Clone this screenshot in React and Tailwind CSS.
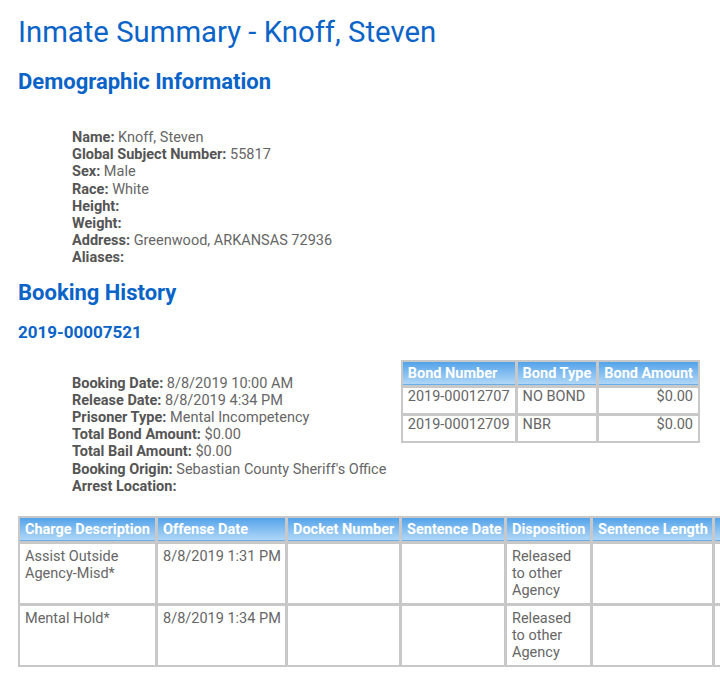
import React from "react"

const demographics = [
  ["Name:", "Knoff, Steven"],
  ["Global Subject Number:", "55817"],
  ["Sex:", "Male"],
  ["Race:", "White"],
  ["Height:", ""],
  ["Weight:", ""],
  ["Address:", "Greenwood, ARKANSAS 72936"],
  ["Aliases:", ""],
]

const booking = [
  ["Booking Date:", "8/8/2019 10:00 AM"],
  ["Release Date:", "8/8/2019 4:34 PM"],
  ["Prisoner Type:", "Mental Incompetency"],
  ["Total Bond Amount:", "$0.00"],
  ["Total Bail Amount:", "$0.00"],
  ["Booking Origin:", "Sebastian County Sheriff's Office"],
  ["Arrest Location:", ""],
]

const bonds = [
  ["2019-00012707", "NO BOND", "$0.00"],
  ["2019-00012709", "NBR", "$0.00"],
]

const charges = [
  ["Assist Outside Agency-Misd*", "8/8/2019 1:31 PM", "", "", "Released to other Agency", "", ""],
  ["Mental Hold*", "8/8/2019 1:34 PM", "", "", "Released to other Agency", "", ""],
]

const chargeCols = [
  ["Charge Description", "w-[137px]"],
  ["Offense Date", "w-[129px]"],
  ["Docket Number", "w-[113px]"],
  ["Sentence Date", "w-[104px]"],
  ["Disposition", "w-[85px]"],
  ["Sentence Length", "w-[121px]"],
  ["Comments", "w-[150px]"],
]

function InfoList({ rows }) {
  return (
    <div className="text-[14.5px] leading-[17.2px] text-[#666]">
      {rows.map(([label, value]) => (
        <div key={label}>
          <span className="font-bold text-[#555]">{label}</span> {value}
        </div>
      ))}
    </div>
  )
}

const th = "border border-[#c8c8c8] bg-gradient-to-b from-[#52a3ea] to-[#b3d9f7] px-[5px] h-[25px] text-left font-bold text-white whitespace-nowrap shadow-[inset_0_-1px_0_#6aaee8]"
const td = "border border-[#c8c8c8] bg-white px-[5px] align-top"

export default function App() {
  return (
    <div className="w-[720px] h-[679px] overflow-hidden bg-white font-['Roboto',sans-serif] text-[#666]">
      <div className="pl-[18px] pt-[14px]">
        <h1 className="text-[29.3px] leading-[36px] text-[#0a64c8]">Inmate Summary - Knoff, Steven</h1>
        <h2 className="mt-[18px] text-[22px] leading-[28px] font-bold text-[#0a64c8]">Demographic Information</h2>
        <div className="pl-[54px] pt-[33px]">
          <InfoList rows={demographics} />
        </div>
        <h2 className="mt-[12px] text-[22px] leading-[28px] font-bold text-[#0a64c8]">Booking History</h2>
        <h3 className="mt-[15px] text-[17px] leading-[20px] font-bold text-[#0a64c8]">2019-00007521</h3>

        <div className="mt-[18px] flex justify-between pr-[20px]">
          <div className="pl-[54px] pt-[15px]">
            <InfoList rows={booking} />
          </div>
          <table className="self-start border-separate border-spacing-[1px] bg-[#c8c8c8] text-[14.5px] leading-[17px]">
            <thead>
              <tr>
                <th className={th}>Bond Number</th>
                <th className={th}>Bond Type</th>
                <th className={th}>Bond Amount</th>
              </tr>
            </thead>
            <tbody>
              {bonds.map((b) => (
                <tr key={b[0]} className="h-[27px]">
                  <td className={`${td} align-middle`}>{b[0]}</td>
                  <td className={`${td} align-middle`}>{b[1]}</td>
                  <td className={`${td} align-middle text-right`}>{b[2]}</td>
                </tr>
              ))}
            </tbody>
          </table>
        </div>

        <table className="mt-[21px] table-fixed w-[847px] border-separate border-spacing-[1px] bg-[#c8c8c8] text-[14.5px] leading-[17.2px]">
          <thead>
            <tr>
              {chargeCols.map(([c, w]) => (
                <th key={c} className={`${th} ${w}`}>{c}</th>
              ))}
            </tr>
          </thead>
          <tbody>
            {charges.map((r) => (
              <tr key={r[0]} className="h-[61px]">
                {r.map((v, i) => (
                  <td key={i} className={`${td} pt-[4px] ${i === 1 ? "whitespace-nowrap" : ""}`}>{v}</td>
                ))}
              </tr>
            ))}
          </tbody>
        </table>
      </div>
    </div>
  )
}
